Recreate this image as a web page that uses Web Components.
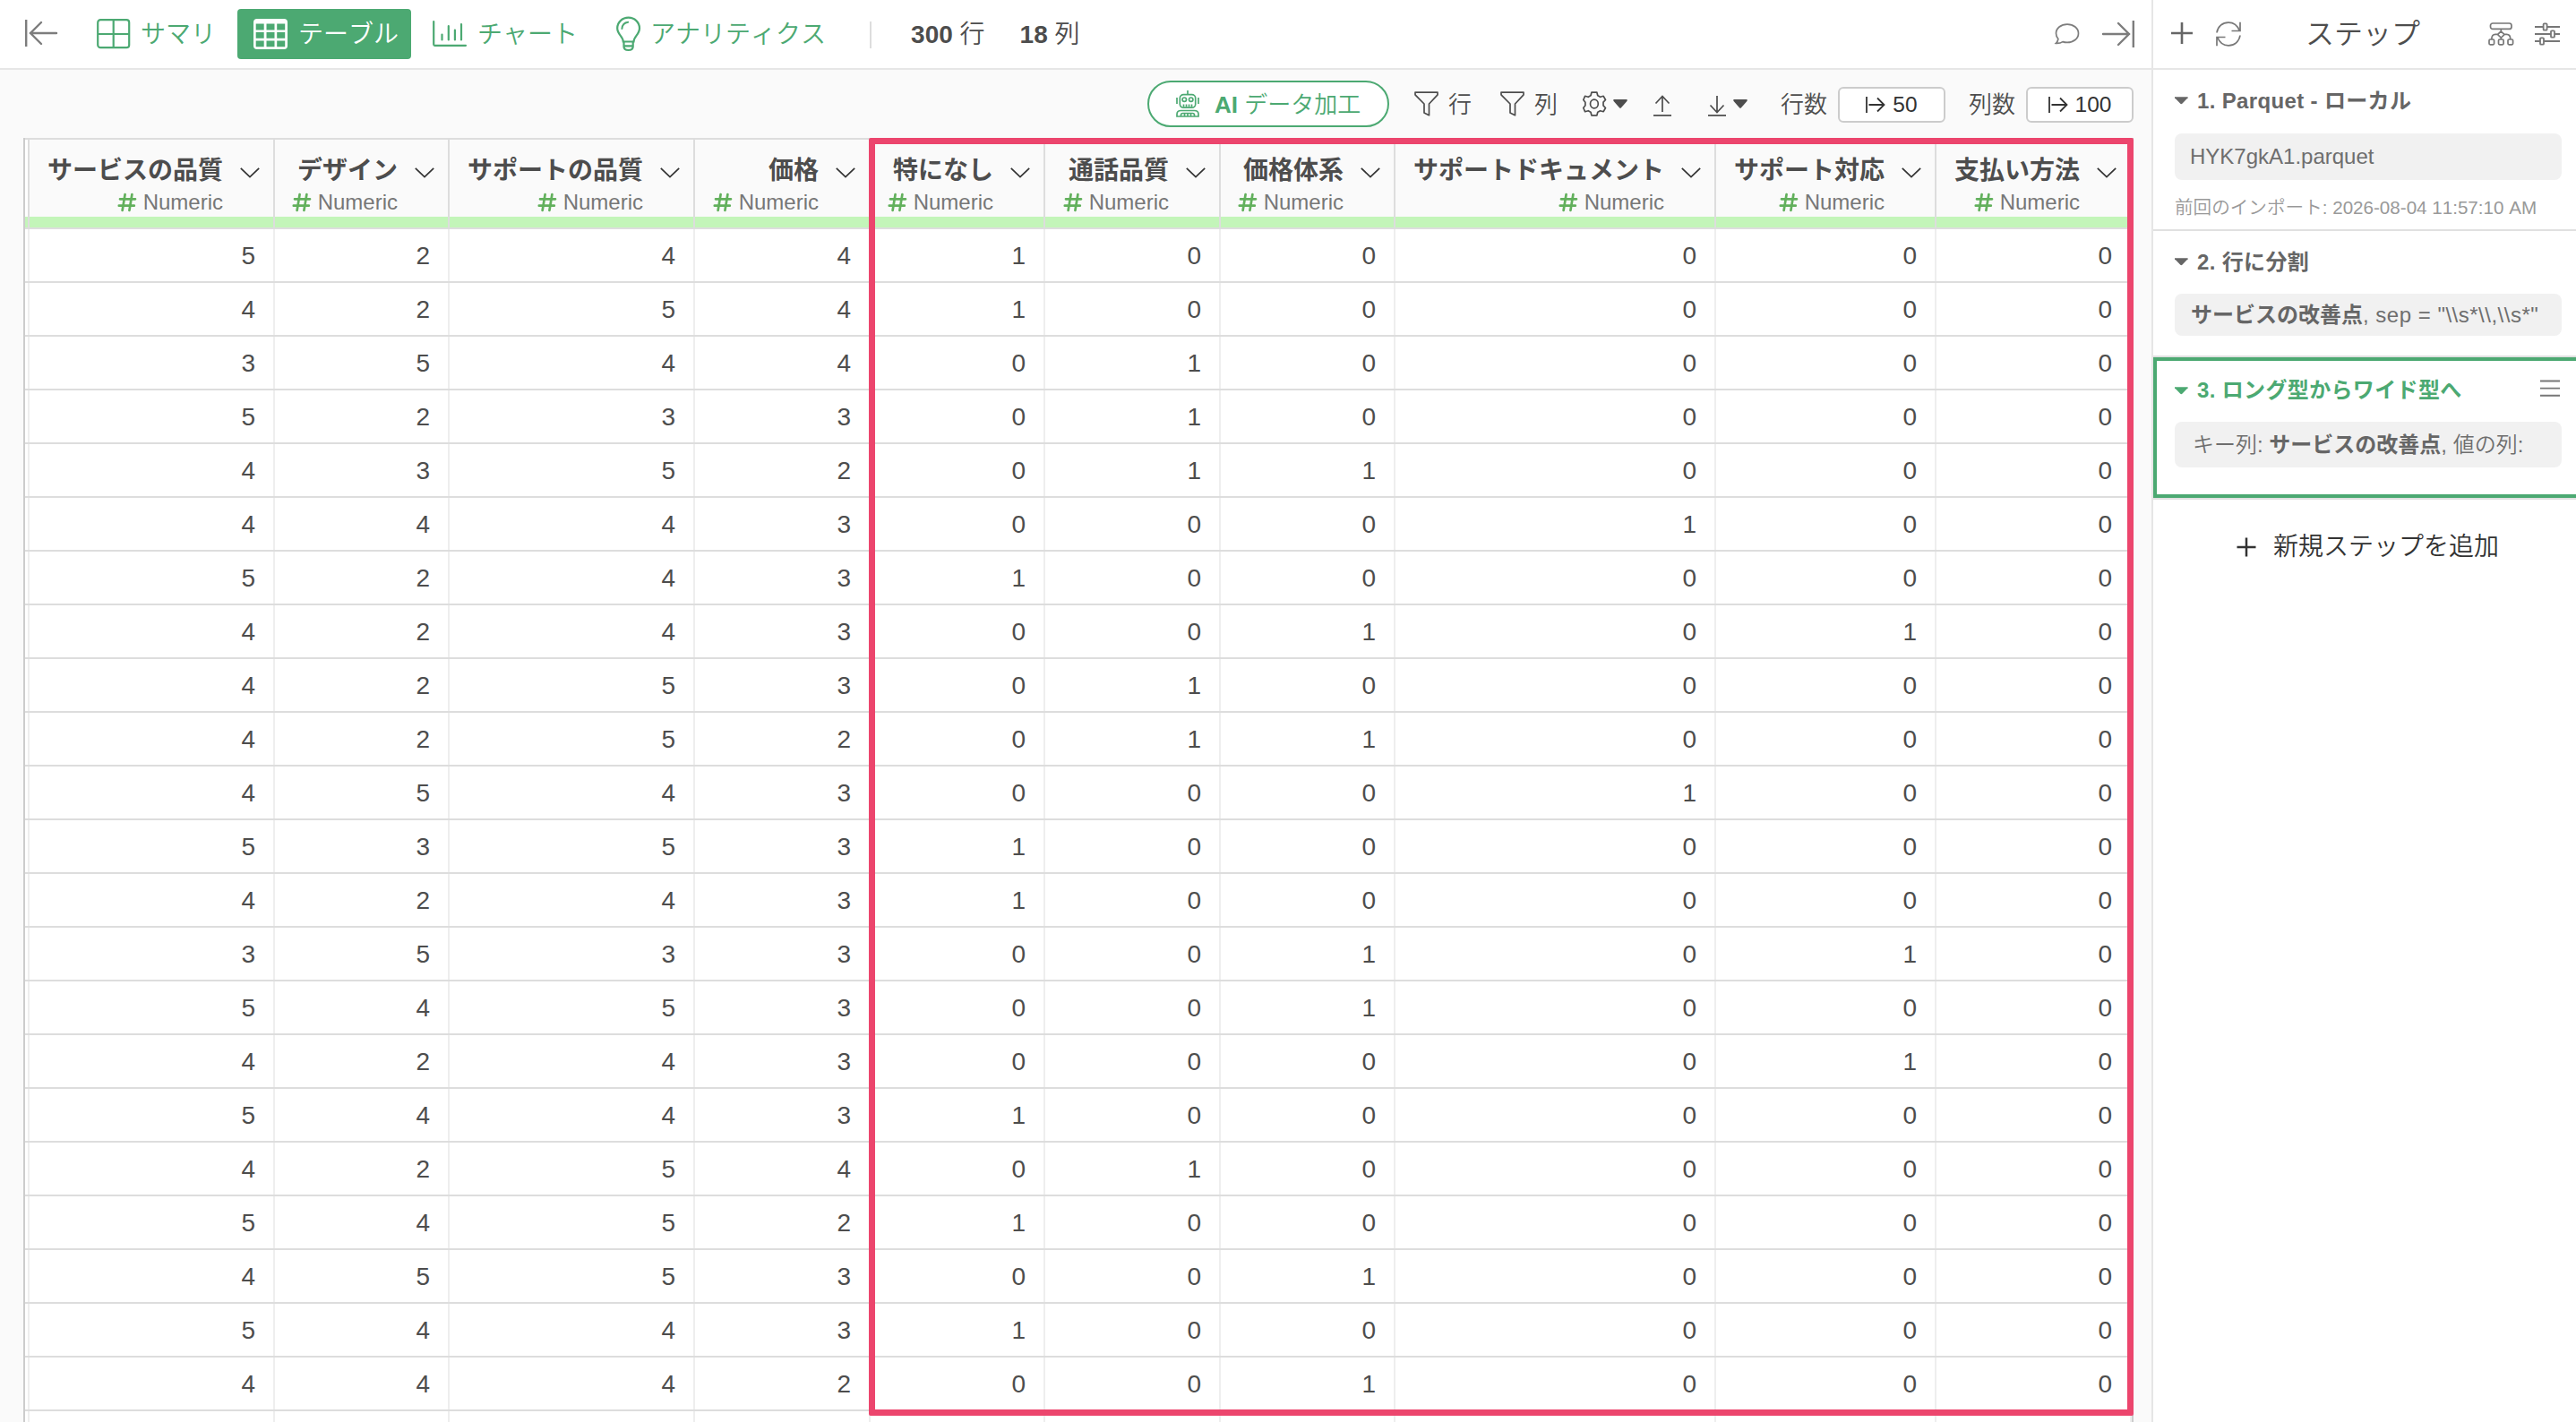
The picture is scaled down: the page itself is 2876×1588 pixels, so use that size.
<!DOCTYPE html>
<html lang="ja">
<head>
<meta charset="utf-8">
<title>テーブル</title>
<style>
    html, body {
        margin: 0;
        height: 100%;
        overflow: hidden;
        background: #fff;
        font-family: "Liberation Sans", "Noto Sans CJK JP", sans-serif;
        font-kerning: none;
        color: #4d4d4d;
    }
    .args {
        letter-spacing: .5px;
    }
</style>
</head>
<body>
<app-shell>
    <nav-bar slot="nav"></nav-bar>
    <table-toolbar slot="toolbar"></table-toolbar>
    <data-table slot="content"></data-table>
    <step-panel slot="side">
        <step-card heading="1. Parquet - ローカル" style="--card-h:178px; --head-h:69px; --box-h:52px">
            HYK7gkA1.parquet
            <span slot="note">前回のインポート: 2026-08-04 11:57:10 AM</span>
        </step-card>
        <step-card heading="2. 行に分割" style="--card-h:139px; --head-h:69px; --box-h:47px; --box-top:1px; --box-pad:18px">
            <b>サービスの改善点</b><span class="args">, sep = "\\s*\\,\\s*"</span>
        </step-card>
        <step-card heading="3. ロング型からワイド型へ" active style="--card-h:157px; --head-h:66px; --box-h:51px; --box-pad:20px">
            キー列: <b>サービスの改善点</b>, 値の列:
        </step-card>
    </step-panel>
</app-shell>

<script>
const ICONS = {
    back: [36, 32, '<g stroke-width="2.4"><path d="M1.2 1v30"/><path d="M35 16H6M18 4 6 16l12 12" stroke-linecap="round"/></g>'],
    forward: [36, 32, '<g stroke-width="2.4"><path d="M34.8 1v30"/><path d="M1 16h29M18 4l12 12-12 12" stroke-linecap="round"/></g>'],
    summary: [38, 34, '<rect x="1.2" y="1.2" width="35" height="31" rx="3" stroke-width="2.2"/><path d="M18.7 1v32M1 17h36" stroke-width="2.2"/>'],
    table: [38, 34, '<rect width="38" height="34" rx="4" fill="#fff" stroke="none"/><path d="M2.7 5.6h9v6.8h-9zM14.5 5.6h9v6.8h-9zM26.2 5.6h9v6.8h-9zM2.7 15h9v6.8h-9zM14.5 15h9v6.8h-9zM26.2 15h9v6.8h-9zM2.7 24.4h9v6.8h-9zM14.5 24.4h9v6.8h-9zM26.2 24.4h9v6.8h-9z" fill="#4ca972" stroke="none"/>'],
    chart: [38, 30, '<path d="M1.2 1v25.6q0 1.2 1.2 1.2H37M10.5 15.5v6M17.8 6.200v15.300M24.900 10.500v11M32 4v17.500" stroke-width="2.2" stroke-linecap="round"/>'],
    bulb: [28, 38, '<path d="M7.800 27.500C7.800 22 1.200 19.500 1.200 12.500a12.400 11.800 0 0 1 24.800 0c0 7-6.500 9.500-6.500 15zM8.500 28v5q0 4 5.100 4t5.100-4v-5M8.500 32.300h10.200" stroke-width="2.2"/><path d="M6.400 13q.5-6.500 6.800-7.300" stroke-width="2" stroke-linecap="round"/>'],
    comment: [28, 24, '<path d="M14 1.200c7 0 12.500 4.200 12.500 10s-5.500 10.200-12.500 10.200c-1.800 0-3.500-.2-5-.8-2 1.300-4.500 1.900-7.600 1.700 1.300-1.300 2.200-2.800 2.500-4.800C2.200 15.700 1.500 13.600 1.500 11.200c0-5.800 5.500-10 12.500-10z" stroke-width="1.700"/>'],
    plus: [26, 26, '<path d="M13 1v24M1 13h24" stroke-width="2.6"/>'],
    addPlus: [22, 22, '<path d="M11 .5v21M.5 11h21" stroke-width="2.500"/>'],
    refresh: [28, 28, '<path d="M1 12.500C2 5.500 7.500 1.200 14 1.200c5.500 0 10 3.200 12.200 9M27 .8v9.700h-9.500M27 15.500c-1 7-6.500 11.300-13 11.300-5.500 0-10-3.200-12.200-9M1 27.200v-9.700h9.500" stroke-width="1.700"/>'],
    tree: [29, 26, '<g stroke-width="1.700"><rect x="2.500" y="1" width="23.500" height="6.400" rx="2.500"/><path d="M14.300 7.500V10M14.300 10l3.800 3.600-3.800 3.600-3.800-3.600zM14.300 17v2M10.800 13.400H8q-4.200 0-4.200 5.600M17.800 13.400h2.800q4.200 0 4.200 5.600"/><rect x="1" y="19" width="5.600" height="5.800" rx="1.200"/><rect x="11.500" y="19" width="5.600" height="5.800" rx="1.200"/><rect x="22" y="19" width="5.600" height="5.800" rx="1.200"/></g>'],
    sliders: [28, 26, '<g stroke-width="1.800"><path d="M0 5h9M14 5h14M0 13h18M22 13h6M0 21h6M10 21h18"/><rect x="9.600" y="1.300" width="4" height="7.400" rx="1"/><rect x="18" y="9.300" width="4" height="7.400" rx="1"/><rect x="6" y="17.300" width="4" height="7.400" rx="1"/></g>'],
    robot: [26, 30, '<g stroke-width="1.700"><path d="M13 0v4.500M1 8v7M25 8v7" /><rect x="4.300" y="4.600" width="17.400" height="14.600" rx="4"/><circle cx="9.300" cy="10.200" r="2.200"/><circle cx="16.700" cy="10.200" r="2.200"/><path d="M8.500 18.500v-3M11.500 18.500v-3M14.500 18.500v-3M17.500 18.500v-3"/><path d="M1 29v-2.500q0-4 4.500-4h15q4.500 0 4.500 4V29zM5.500 29v-1.500q0-2 2-2h11q2 0 2 2V29M9.500 29v-3.500M13 29v-3.500M16.500 29v-3.500"/></g>'],
    filter: [27, 28, '<path d="M1 1.200h25v2.600L16.500 14v12.700l-5.500-2.800V14L1 3.800z" stroke-width="1.700" stroke-linejoin="round"/>'],
    gear: [26, 28, '<path d="M9.900 1.200h6l.9 3.500q1.600.6 2.800 1.600l3.600-1 2.300 4.200-2.500 2.700v3.600l2.500 2.700-2.300 4.200-3.600-1q-1.200 1-2.800 1.600l-.9 3.500h-6L9 23.300q-1.600-.6-2.800-1.600l-3.600 1L.8 18.500l2.100-2.700v-3.600L.8 9.500l1.800-4.200 3.600 1Q7.400 5.300 9 4.700z" stroke-width="1.700" stroke-linejoin="round"/><ellipse cx="12.900" cy="14" rx="4.400" ry="4.900" stroke-width="1.700"/>'],
    caret: [16, 10, '<path d="M.4 0h15.200v1.700L9 9.200q-1 1-2 0L.4 1.700z" fill="currentColor" stroke="none"/>'],
    smallCaret: [15, 9, '<path d="M0 .3h14.600v1L8.300 7.700q-1 .9-2 0L0 1.300z" fill="currentColor" stroke="none"/>'],
    upload: [20, 24, '<path d="M10 19V1.500M2.500 9.500 10 1.500l7.500 8M0 22.800h20" stroke-width="1.700"/>'],
    download: [20, 24, '<path d="M10 1v18M2.500 11.500 10 19.500l7.500-8M0 22.800h20" stroke-width="1.700"/>'],
    mapsTo: [22, 20, '<path d="M1 1v18M3.500 10H20M13 2.500l7.500 7.500-7.500 7.500" stroke-width="1.800"/>'],
    chevron: [22, 12, '<path d="M.8.8 11 10.600 21.200.8" stroke="#333" stroke-width="1.700"/>'],
    hash: [20, 20, '<path d="M7.600 1 4.600 19M15.400 1l-3 18M2 6.300h17M.8 13.700h17" stroke="#62b05c" stroke-width="2.700" stroke-linecap="round"/>'],
    menu: [22, 19, '<path d="M0 1.500h22M0 9.600h22M0 17.700h22" stroke-width="1.900"/>']
};

class BaseElement extends HTMLElement {
    constructor() {
        super();
        this.attachShadow({ mode: 'open' });
    }

    connectedCallback() {
        const template = document.createElement('template');
        template.innerHTML = this.template();
        this.shadowRoot.replaceChildren(template.content.cloneNode(true));
    }
}

class UiIcon extends BaseElement {
    template() {
        const [width, height, body] = ICONS[this.getAttribute('name')];
        return `
            <style>
                :host { display: block; flex: none; width: ${width}px; height: ${height}px; }
                svg { display: block; overflow: visible; }
            </style>
            <svg width="${width}" height="${height}" viewBox="0 0 ${width} ${height}" fill="none" stroke="currentColor">${body}</svg>
        `;
    }
}

class AppShell extends BaseElement {
    template() {
        return `
            <style>
                :host {
                    display: grid;
                    grid-template-columns: 2402px 1fr;
                    height: 100vh;
                }
                .main {
                    display: grid;
                    grid-template-rows: 78px 76px 1fr;
                    min-height: 0;
                    background: #fafafa;
                }
                .side {
                    border-left: 2px solid #e6e6e6;
                    background: #fff;
                    min-width: 0;
                }
            </style>
            <div class="main">
                <slot name="nav"></slot>
                <slot name="toolbar"></slot>
                <slot name="content"></slot>
            </div>
            <div class="side"><slot name="side"></slot></div>
        `;
    }
}

class NavTab extends BaseElement {
    template() {
        return `
            <style>
                :host {
                    display: flex;
                    align-items: center;
                    box-sizing: border-box;
                    height: 56px;
                    padding: 0 14px 0 18px;
                    gap: var(--tab-gap, 12px);
                    border-radius: 4px;
                    color: #4ca972;
                    font-size: 28px;
                    line-height: 40px;
                    font-weight: 350;
                    white-space: nowrap;
                }
                :host([active]) { background: #4ca972; color: #fff; }
                span { padding-top: 1px; }
            </style>
            <ui-icon name="${this.getAttribute('icon')}"></ui-icon>
            <span><slot></slot></span>
        `;
    }
}

class NavBar extends BaseElement {
    template() {
        return `
            <style>
                :host {
                    display: flex;
                    align-items: center;
                    box-sizing: border-box;
                    padding: 0 19px 0 28px;
                    border-bottom: 2px solid #e6e6e6;
                    background: #fff;
                    font-size: 28px;
                    line-height: 40px;
                    font-weight: 350;
                    white-space: nowrap;
                }
                b { font-weight: 700; }
                .edge { color: #7d7d7d; }
                .back { margin: -2px 26px 0 0; }
                .divider { width: 2px; height: 30px; margin: 2px 44px 0 35px; background: #ddd; }
                .count { margin-right: 39px; padding-top: 2px; }
                .spacer { flex: 1; }
                .comment { margin-right: 25px; color: #7d7d7d; }
            </style>
            <ui-icon class="edge back" name="back"></ui-icon>
            <nav-tab icon="summary" style="--tab-gap:11px">サマリ</nav-tab>
            <nav-tab icon="table" active style="margin-left:10px">テーブル</nav-tab>
            <nav-tab icon="chart" style="margin-left:6px">チャート</nav-tab>
            <nav-tab icon="bulb" style="margin-left:11px; --tab-gap:10px">アナリティクス</nav-tab>
            <div class="divider"></div>
            <div class="count"><b>300</b> 行</div>
            <div class="count"><b>18</b> 列</div>
            <div class="spacer"></div>
            <ui-icon class="comment" name="comment"></ui-icon>
            <ui-icon class="edge" name="forward"></ui-icon>
        `;
    }
}

class LimitBox extends BaseElement {
    template() {
        return `
            <style>
                :host {
                    display: flex;
                    align-items: center;
                    justify-content: center;
                    gap: 8px;
                    box-sizing: border-box;
                    width: 120px;
                    height: 40px;
                    border: 2px solid #ccc;
                    border-radius: 6px;
                    background: #fff;
                    color: #333;
                    font-size: 24.5px;
                    line-height: 36px;
                }
            </style>
            <ui-icon name="mapsTo"></ui-icon><span><slot></slot></span>
        `;
    }
}

class TableToolbar extends BaseElement {
    template() {
        return `
            <style>
                :host {
                    display: flex;
                    align-items: center;
                    justify-content: flex-end;
                    padding-right: 20px;
                    font-size: 26px;
                    line-height: 40px;
                    font-weight: 350;
                    white-space: nowrap;
                }
                b { font-weight: 700; }
                .ai {
                    display: flex;
                    align-items: center;
                    box-sizing: border-box;
                    width: 270px;
                    height: 52px;
                    padding-left: 30px;
                    gap: 17px;
                    border: 2px solid #4ca972;
                    border-radius: 26px;
                    background: #fff;
                    color: #4ca972;
                }
                span { padding-top: 2px; }
            </style>
            <div class="ai"><ui-icon name="robot"></ui-icon><span><b>AI</b> データ加工</span></div>
            <ui-icon name="filter" style="margin-left:28px"></ui-icon>
            <span style="margin-left:11px">行</span>
            <ui-icon name="filter" style="margin-left:32px"></ui-icon>
            <span style="margin-left:11px">列</span>
            <ui-icon name="gear" style="margin-left:28px"></ui-icon>
            <ui-icon name="caret" style="margin-left:8px"></ui-icon>
            <ui-icon name="upload" style="margin:3px 0 0 29px"></ui-icon>
            <ui-icon name="download" style="margin:3px 0 0 41px"></ui-icon>
            <ui-icon name="caret" style="margin-left:8px"></ui-icon>
            <span style="margin-left:37px">行数</span>
            <limit-box style="margin:2px 0 0 12px">50</limit-box>
            <span style="margin-left:26px">列数</span>
            <limit-box style="margin:2px 0 0 12px">100</limit-box>
        `;
    }
}

class ColumnHeader extends BaseElement {
    template() {
        return `
            <style>
                :host {
                    display: flex;
                    flex-direction: column;
                    box-sizing: border-box;
                    height: 98px;
                    border-right: 2px solid #ddd;
                    background: #fafafa;
                }
                .body {
                    display: flex;
                    justify-content: flex-end;
                    flex: 1;
                    padding: 15px 15px 0 0;
                }
                .text {
                    display: flex;
                    flex-direction: column;
                    align-items: flex-end;
                    margin-right: 19px;
                }
                .name { font-size: 28px; line-height: 40px; font-weight: 700; white-space: nowrap; }
                .type {
                    display: flex;
                    align-items: center;
                    gap: 8px;
                    margin-top: -1px;
                    color: #777;
                    font-size: 24px;
                    line-height: 32px;
                }
                .chevron { margin-top: 16px; }
                .quality { height: 12px; background: #c3f5b9; }
            </style>
            <div class="body">
                <div class="text">
                    <div class="name"><slot></slot></div>
                    <div class="type"><ui-icon name="hash"></ui-icon><span>Numeric</span></div>
                </div>
                <ui-icon class="chevron" name="chevron"></ui-icon>
            </div>
            <div class="quality"></div>
        `;
    }
}

const COLUMNS = [
    ['サービスの品質', 274],
    ['デザイン', 195],
    ['サポートの品質', 274],
    ['価格', 196],
    ['特になし', 195],
    ['通話品質', 196],
    ['価格体系', 195],
    ['サポートドキュメント', 358],
    ['サポート対応', 246],
    ['支払い方法', 218]
];

const ROWS = [
    '5244100000', '4254100000', '3544010000', '5233010000', '4352011000', '4443000100',
    '5243100000', '4243001010', '4253010000', '4252011000', '4543000100', '5353100000',
    '4243100000', '3533001010', '5453001000', '4243000010', '5443100000', '4254010000',
    '5452100000', '4553001000', '5443100000', '4442001000'
];

class DataTable extends BaseElement {
    template() {
        const blankRow = ' '.repeat(COLUMNS.length);
        return `
            <style>
                :host {
                    display: block;
                    position: relative;
                    min-height: 0;
                    overflow: hidden;
                }
                .grid {
                    box-sizing: border-box;
                    width: 2356px;
                    height: 100%;
                    overflow: hidden;
                    margin-left: 26px;
                    border: solid #ccc;
                    border-width: 0 2px 0 2px;
                    box-shadow: inset 0 2px #ddd;
                    padding-top: 2px;
                    background: #fff;
                }
                .row {
                    display: grid;
                    grid-template-columns: 5px ${COLUMNS.map(column => column[1] + 'px').join(' ')};
                    box-sizing: border-box;
                    height: 60px;
                    border-bottom: 2px solid #ddd;
                }
                .row.head { height: 100px; }
                .lead, .cell { border-right: 2px solid #eee; }
                .head .lead {
                    border-color: #ddd;
                    background: linear-gradient(#c3f5b9, #c3f5b9) 0 86px / 100% 12px no-repeat;
                }
                .cell {
                    padding: 2px 20px 0 0;
                    font-size: 28px;
                    line-height: 56px;
                    text-align: right;
                }
                .highlight {
                    position: absolute;
                    left: 970px;
                    top: 0;
                    box-sizing: border-box;
                    width: 1412px;
                    height: 1427px;
                    border: 7px solid #ec456d;
                    border-radius: 2px;
                }
            </style>
            <div class="grid">
                <div class="row head">
                    <div class="lead"></div>
                    ${COLUMNS.map(column => `<column-header>${column[0]}</column-header>`).join('')}
                </div>
                ${[...ROWS, blankRow].map(row => `
                    <div class="row">
                        <div class="lead"></div>
                        ${[...row].map(value => `<div class="cell">${value}</div>`).join('')}
                    </div>
                `).join('')}
            </div>
            <div class="highlight"></div>
        `;
    }
}

class StepCard extends BaseElement {
    template() {
        const active = this.hasAttribute('active');
        return `
            <style>
                :host {
                    display: block;
                    box-sizing: border-box;
                    height: calc(var(--card-h) + 2px);
                    border-bottom: 2px solid #e0e0e0;
                    color: #6e6e6e;
                    font-size: 24px;
                    font-weight: 350;
                    white-space: nowrap;
                }
                .card { box-sizing: border-box; height: 100%; padding: 0 16px 0 24px; overflow: hidden; }
                :host([active]) .card {
                    border: solid #4ca972;
                    border-width: 4px 0 4px 4px;
                    padding-left: 20px;
                }
                .head {
                    display: flex;
                    align-items: center;
                    gap: 10px;
                    height: var(--head-h);
                    color: #666;
                    font-weight: 700;
                    line-height: 36px;
                }
                :host([active]) .head { color: #4ca972; }
                .title { flex: 1; letter-spacing: .35px; }
                .menu { color: #777; margin: 0 2px 6px 0; }
                .box {
                    box-sizing: border-box;
                    height: var(--box-h);
                    margin-top: var(--box-top, 2px);
                    padding-left: var(--box-pad, 17px);
                    border-radius: 8px;
                    background: #f1f1f1;
                    line-height: var(--box-h);
                }
                ::slotted(b) { color: #666; font-weight: 700; }
                .note {
                    margin-top: 16px;
                    color: #999;
                    font-size: 20.6px;
                    line-height: 30px;
                }
            </style>
            <div class="card">
                <div class="head">
                    <ui-icon name="smallCaret"></ui-icon>
                    <span class="title">${this.getAttribute('heading')}</span>
                    ${active ? '<ui-icon class="menu" name="menu"></ui-icon>' : ''}
                </div>
                <div class="box"><slot></slot></div>
                <div class="note"><slot name="note"></slot></div>
            </div>
        `;
    }
}

class StepPanel extends BaseElement {
    template() {
        return `
            <style>
                :host { display: flex; flex-direction: column; }
                .bar {
                    display: flex;
                    align-items: center;
                    box-sizing: border-box;
                    height: 78px;
                    padding: 0 18px 0 19px;
                    border-bottom: 2px solid #e6e6e6;
                    color: #777;
                }
                .bar .plus { margin: -2px 25px 0 0; color: #666; }
                .title {
                    margin: -1px 0 0 72px;
                    color: #4d4d4d;
                    font-size: 32px;
                    line-height: 48px;
                    font-weight: 350;
                }
                .tree { margin-left: auto; }
                .sliders { margin-left: 23px; }
                .add {
                    display: flex;
                    align-items: center;
                    gap: 19px;
                    padding: 32px 0 0 93px;
                    color: #333;
                    font-size: 28px;
                    line-height: 42px;
                    font-weight: 350;
                    white-space: nowrap;
                }
            </style>
            <div class="bar">
                <ui-icon class="plus" name="plus"></ui-icon>
                <ui-icon name="refresh"></ui-icon>
                <div class="title">ステップ</div>
                <ui-icon class="tree" name="tree"></ui-icon>
                <ui-icon class="sliders" name="sliders"></ui-icon>
            </div>
            <slot></slot>
            <div class="add"><ui-icon name="addPlus"></ui-icon><span>新規ステップを追加</span></div>
        `;
    }
}

customElements.define('ui-icon', UiIcon);
customElements.define('nav-tab', NavTab);
customElements.define('nav-bar', NavBar);
customElements.define('limit-box', LimitBox);
customElements.define('table-toolbar', TableToolbar);
customElements.define('column-header', ColumnHeader);
customElements.define('data-table', DataTable);
customElements.define('step-card', StepCard);
customElements.define('step-panel', StepPanel);
customElements.define('app-shell', AppShell);
</script>
</body>
</html>
